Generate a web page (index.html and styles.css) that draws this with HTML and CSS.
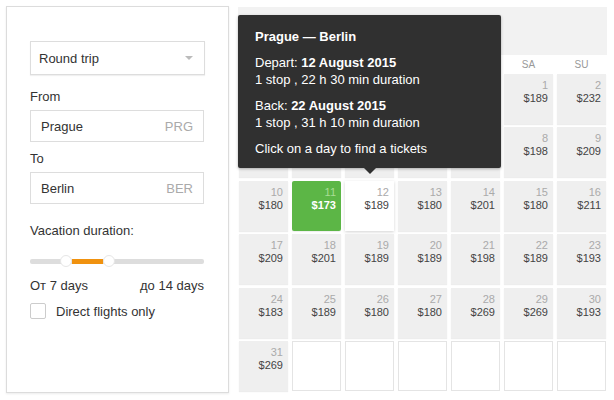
FILE: index.html
```html
<!DOCTYPE html>
<html>
<head>
<meta charset="utf-8">
<link rel="stylesheet" href="styles.css">
</head>
<body>
<div class="page">
  <div class="panel">
    <div class="select"><span>Round trip</span><span class="caret"></span></div>
    <div class="label label-from">From</div>
    <div class="field"><span>Prague</span><span class="code">PRG</span></div>
    <div class="label label-to">To</div>
    <div class="field"><span>Berlin</span><span class="code">BER</span></div>
    <div class="label label-vac">Vacation duration:</div>
    <div class="slider">
      <div class="track"></div>
      <div class="range"></div>
      <div class="knob knob-a"></div>
      <div class="knob knob-b"></div>
    </div>
    <div class="range-text"><span>От 7 days</span><span>до 14 days</span></div>
    <div class="check"><span class="box"></span><span>Direct flights only</span></div>
  </div>

  <div class="calendar">
    <div class="cal-head"></div>
    <div class="weekdays">
      <span></span><span></span><span></span><span></span><span></span><span>SA</span><span>SU</span>
    </div>
    <div class="grid">
      <div class="cell blank"></div><div class="cell blank"></div><div class="cell blank"></div><div class="cell blank"></div><div class="cell blank"></div>
      <div class="cell"><div class="d">1</div><div class="p">$189</div></div>
      <div class="cell"><div class="d">2</div><div class="p">$232</div></div>

      <div class="cell blank"></div><div class="cell blank"></div><div class="cell blank"></div><div class="cell blank"></div><div class="cell blank"></div>
      <div class="cell"><div class="d">8</div><div class="p">$198</div></div>
      <div class="cell"><div class="d">9</div><div class="p">$209</div></div>

      <div class="cell"><div class="d">10</div><div class="p">$180</div></div>
      <div class="cell best"><div class="d">11</div><div class="p">$173</div></div>
      <div class="cell hover"><div class="d">12</div><div class="p">$189</div></div>
      <div class="cell"><div class="d">13</div><div class="p">$180</div></div>
      <div class="cell"><div class="d">14</div><div class="p">$201</div></div>
      <div class="cell"><div class="d">15</div><div class="p">$180</div></div>
      <div class="cell"><div class="d">16</div><div class="p">$211</div></div>

      <div class="cell"><div class="d">17</div><div class="p">$209</div></div>
      <div class="cell"><div class="d">18</div><div class="p">$201</div></div>
      <div class="cell"><div class="d">19</div><div class="p">$189</div></div>
      <div class="cell"><div class="d">20</div><div class="p">$189</div></div>
      <div class="cell"><div class="d">21</div><div class="p">$198</div></div>
      <div class="cell"><div class="d">22</div><div class="p">$189</div></div>
      <div class="cell"><div class="d">23</div><div class="p">$193</div></div>

      <div class="cell"><div class="d">24</div><div class="p">$183</div></div>
      <div class="cell"><div class="d">25</div><div class="p">$189</div></div>
      <div class="cell"><div class="d">26</div><div class="p">$180</div></div>
      <div class="cell"><div class="d">27</div><div class="p">$180</div></div>
      <div class="cell"><div class="d">28</div><div class="p">$269</div></div>
      <div class="cell"><div class="d">29</div><div class="p">$269</div></div>
      <div class="cell"><div class="d">30</div><div class="p">$193</div></div>

      <div class="cell"><div class="d">31</div><div class="p">$269</div></div>
      <div class="cell empty"></div><div class="cell empty"></div><div class="cell empty"></div><div class="cell empty"></div><div class="cell empty"></div><div class="cell empty"></div>
    </div>

    <div class="tooltip">
      <div class="tt-title">Prague — Berlin</div>
      <div class="tt-group">Depart: <b>12 August 2015</b><br>1 stop , 22 h 30 min duration</div>
      <div class="tt-group">Back: <b>22 August 2015</b><br>1 stop , 31 h 10 min duration</div>
      <div class="tt-foot">Click on a day to find a tickets</div>
    </div>
  </div>
</div>
</body>
</html>
```
FILE: styles.css
```css
* { box-sizing: border-box; }
html, body { margin: 0; padding: 0; background: #fff; }
body {
  font-family: "Liberation Sans", Arial, sans-serif;
  color: #333;
  font-size: 13px;
}
.page {
  display: flex;
  align-items: flex-start;
  padding: 6px 0 0 6px;
  width: 614px;
  height: 400px;
}
.panel {
  width: 223px;
  height: 387px;
  border: 1px solid #dcdcdc;
  box-shadow: 0 1px 2px rgba(0,0,0,0.08);
  padding: 34px 0 0 23px;
  display: flex;
  flex-direction: column;
}
.select {
  width: 175px;
  height: 34px;
  border: 1px solid #ddd;
  box-shadow: 0 1px 1px rgba(0,0,0,0.06);
  display: flex;
  align-items: center;
  justify-content: space-between;
  padding: 0 11px 0 8px;
  color: #333;
}
.caret {
  width: 0; height: 0;
  border-left: 4px solid transparent;
  border-right: 4px solid transparent;
  border-top: 4px solid #bbb;
}
.label { line-height: 16px; color: #333; }
.label-from { margin-top: 14px; }
.label-to { margin-top: 9px; }
.label-vac { margin-top: 19px; }
.field {
  margin-top: 5px;
  width: 174px;
  height: 32px;
  border: 1px solid #ddd;
  display: flex;
  align-items: center;
  justify-content: space-between;
  padding: 0 10px;
  color: #333;
}
.code { color: #aaa; }
.slider {
  position: relative;
  margin-top: 16px;
  width: 174px;
  height: 12px;
}
.track {
  position: absolute; left: 0; right: 0; top: 4px;
  height: 5px; background: #ddd; border-radius: 2px;
}
.range {
  position: absolute; left: 42px; width: 31px; top: 4px;
  height: 5px; background: #f0920f;
}
.knob {
  position: absolute; top: 0; width: 12px; height: 12px;
  border-radius: 50%; background: #fff; border: 1px solid #e6e6e6;
}
.knob-a { left: 30px; }
.knob-b { left: 73px; }
.range-text {
  margin-top: 11px;
  width: 174px;
  display: flex;
  justify-content: space-between;
  line-height: 16px;
  color: #333;
}
.check {
  margin-top: 9px;
  display: flex;
  align-items: center;
  gap: 10px;
  color: #333;
}
.box {
  width: 16px; height: 16px;
  border: 1px solid #ccc;
  border-radius: 2px;
}

.calendar {
  position: relative;
  margin-left: 9px;
  margin-top: 1px;
  width: 369px;
}
.cal-head {
  height: 48px;
  background: #f2f2f2;
}
.weekdays {
  display: grid;
  grid-template-columns: repeat(7, 49px);
  column-gap: 4px;
  padding-left: 1px;
  height: 18px;
  align-items: center;
  text-align: center;
  font-size: 10px;
  color: #999;
}
.grid {
  margin-top: 1px;
  padding-left: 1px;
  display: grid;
  grid-template-columns: repeat(7, 49px);
  grid-auto-rows: 50px;
  column-gap: 4px;
  row-gap: 3.4px;
}
.cell {
  background: #efefef;
  box-shadow: 0 1px 1px rgba(0,0,0,0.07);
  text-align: right;
  padding: 5px 5px 0 0;
  font-size: 11px;
  line-height: 13px;
}
.cell .d { color: #aaa; }
.cell .p { color: #444; }
.cell.blank { background: #efefef; }
.cell.best {
  background: #5cb646;
  border-radius: 2px;
}
.cell.best .d { color: #a9dd95; }
.cell.best .p { color: #fff; font-weight: bold; }
.cell.hover {
  background: #fff;
  box-shadow: 0 1px 3px rgba(0,0,0,0.18);
}
.cell.empty {
  background: #fff;
  border: 1px solid #e4e4e4;
  box-shadow: none;
}

.tooltip {
  position: absolute;
  left: 0;
  top: 8px;
  width: 263px;
  height: 153px;
  background: #303030;
  border-radius: 2px;
  color: #fff;
  padding: 13px 0 0 17px;
  font-size: 13px;
  line-height: 17px;
  box-shadow: 0 1px 3px rgba(0,0,0,0.3);
}
.tooltip::after {
  content: "";
  position: absolute;
  left: 126px;
  bottom: -6px;
  border-left: 6px solid transparent;
  border-right: 6px solid transparent;
  border-top: 6px solid #303030;
}
.tt-title { font-weight: bold; }
.tt-group { margin-top: 9px; }
.tt-foot { margin-top: 9px; }
```
